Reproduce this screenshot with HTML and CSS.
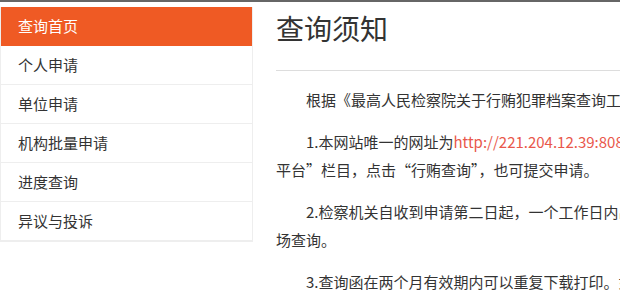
FILE: index.html
```html
<!DOCTYPE html>
<html>
<head>
    <meta charset="UTF-8">
    <title>查询须知</title>
    <link rel="stylesheet" href="styles.css">
</head>
<body>
<div class="topline"></div>
<div class="wrap">
    <ul class="side">
        <li class="active"><a href="#">查询首页</a></li>
        <li><a href="#">个人申请</a></li>
        <li><a href="#">单位申请</a></li>
        <li><a href="#">机构批量申请</a></li>
        <li><a href="#">进度查询</a></li>
        <li><a href="#">异议与投诉</a></li>
    </ul>
    <div class="main">
        <h2 class="title">查询须知</h2>
        <div class="content">
            <p class="indent">根据《最高人民检察院关于行贿犯罪档案查询工作规定》，</p>
            <p class="indent">1.本网站唯一的网址为<a href="#">http://221.204.12.39:8080/xhcx</a>，也可以通过检察院网站“行贿犯罪档案查询<br>平台”栏目，点击“行贿查询”，也可提交申请。</p>
            <p class="indent">2.检察机关自收到申请第二日起，一个工作日内出具查询结果，申请人可以网上或现<br>场查询。</p>
            <p class="indent">3.查询函在两个月有效期内可以重复下载打印。如有疑问请咨询当地检察机关。</p>
        </div>
    </div>
</div>
</body>
</html>
```

FILE: styles.css
```css
* {
    margin: 0;
    padding: 0;
}
html, body {
    overflow: hidden;
}
body {
    font-family: "Noto Sans CJK SC", "Microsoft YaHei", sans-serif;
    color: #333;
    background: #fff;
}
.topline {
    height: 2px;
    background-color: #666;
}
.wrap {
    display: flex;
    padding-top: 5px;
}
.side {
    list-style: none;
    width: 251px;
    flex-shrink: 0;
    border: 1px solid #eee;
    border-top: none;
    align-self: flex-start;
}
.side li {
    height: 38px;
    line-height: 38px;
    border-bottom: 1px solid #eee;
    font-size: 15px;
}
.side li a {
    display: block;
    padding-left: 17px;
    color: #333;
    text-decoration: none;
}
.side li.active {
    background-color: #ef5a24;
    border-bottom-color: #ef5a24;
}
.side li.active a {
    color: #fff;
}
.main {
    margin-left: 23px;
    width: 760px;
    flex-shrink: 0;
}
.title {
    font-size: 28px;
    font-weight: normal;
    line-height: 40px;
    padding-top: 1px;
    padding-bottom: 22px;
    border-bottom: 1px solid #ddd;
}
.content {
    padding-top: 15px;
    font-size: 15px;
    line-height: 28px;
    white-space: nowrap;
}
.content p {
    margin-bottom: 14px;
}
.content p.indent {
    text-indent: 2em;
}
.content a {
    color: #e9584b;
    text-decoration: none;
}
```
